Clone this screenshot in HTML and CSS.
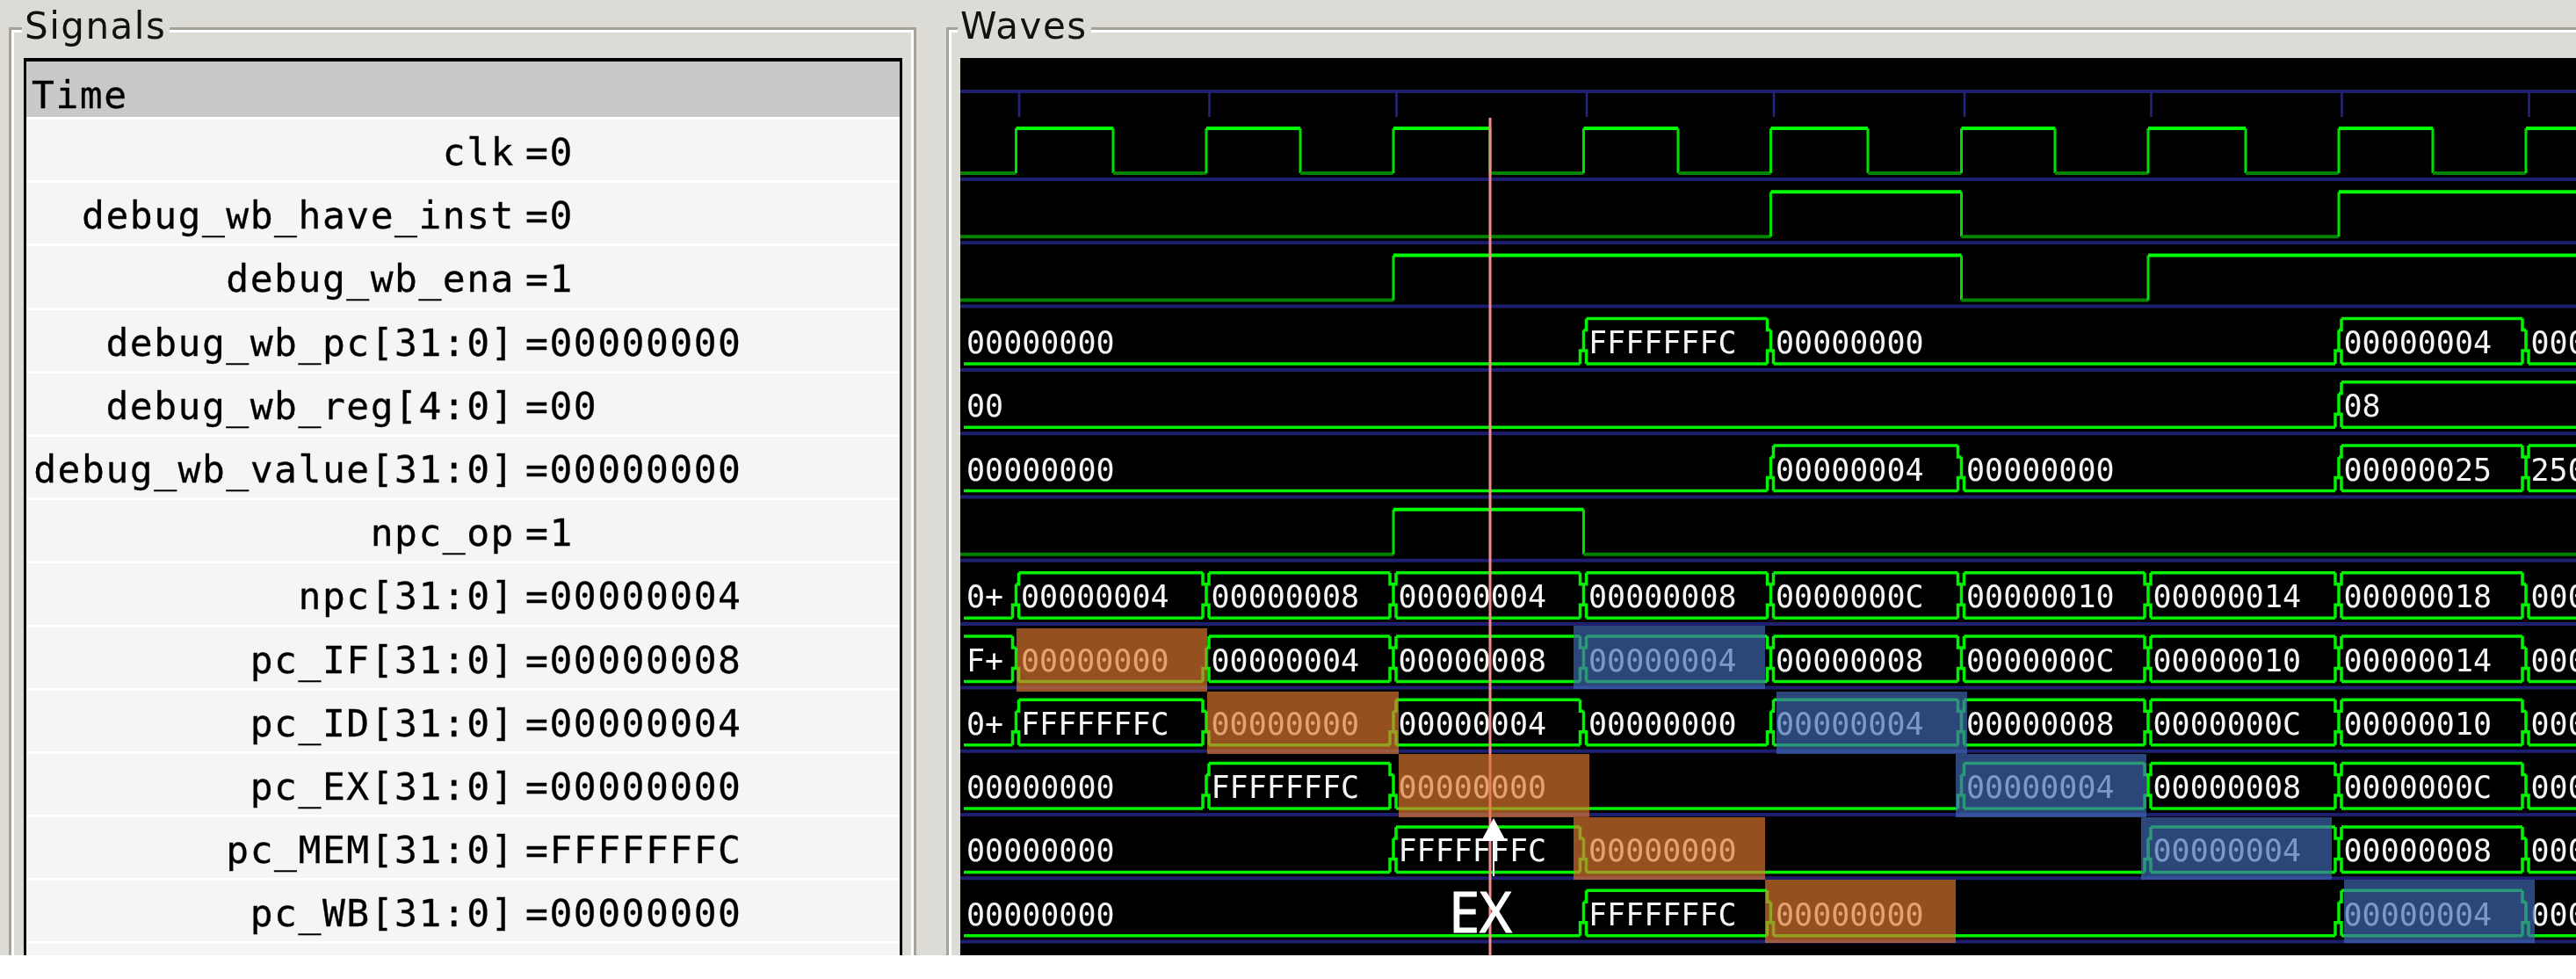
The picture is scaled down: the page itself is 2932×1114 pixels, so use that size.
FILE: index.html
```html
<!DOCTYPE html>
<html lang="en">
<head>
    <meta charset="utf-8">
    <title>GTKWave</title>
    <link rel="stylesheet" href="styles.css">
</head>

<body>
<div class="main">
    <div class="frame frame-signals">
        <div class="frame-inner">
            <span class="legend">Signals</span>
            <div class="sig-list">
                <div class="sig-head">Time</div>
                <div class="sig-row"><span class="sig-name">clk</span><span class="sig-val">=0</span></div>
                <div class="sig-row"><span class="sig-name">debug_wb_have_inst</span><span class="sig-val">=0</span></div>
                <div class="sig-row"><span class="sig-name">debug_wb_ena</span><span class="sig-val">=1</span></div>
                <div class="sig-row"><span class="sig-name">debug_wb_pc[31:0]</span><span class="sig-val">=00000000</span></div>
                <div class="sig-row"><span class="sig-name">debug_wb_reg[4:0]</span><span class="sig-val">=00</span></div>
                <div class="sig-row"><span class="sig-name">debug_wb_value[31:0]</span><span class="sig-val">=00000000</span></div>
                <div class="sig-row"><span class="sig-name">npc_op</span><span class="sig-val">=1</span></div>
                <div class="sig-row"><span class="sig-name">npc[31:0]</span><span class="sig-val">=00000004</span></div>
                <div class="sig-row"><span class="sig-name">pc_IF[31:0]</span><span class="sig-val">=00000008</span></div>
                <div class="sig-row"><span class="sig-name">pc_ID[31:0]</span><span class="sig-val">=00000004</span></div>
                <div class="sig-row"><span class="sig-name">pc_EX[31:0]</span><span class="sig-val">=00000000</span></div>
                <div class="sig-row"><span class="sig-name">pc_MEM[31:0]</span><span class="sig-val">=FFFFFFFC</span></div>
                <div class="sig-row"><span class="sig-name">pc_WB[31:0]</span><span class="sig-val">=00000000</span></div>
                <div class="sig-row"></div>
            </div>
        </div>
    </div>
    <div class="frame frame-waves">
        <div class="frame-inner">
            <span class="legend">Waves</span>
            <div class="wave-canvas">
                <svg id="waves" class="wave-svg" width="1839" height="1021" viewBox="1093 66 1839 1021"></svg>
            </div>
        </div>
    </div>
</div>

<script>
    const ROW = 72.3;
    // rising edges of clk, everything on the bus rows changes here
    const E = [1156.5, 1373, 1586, 1802.5, 2015.5, 2232.5, 2445, 2662, 2875];
    const FALLS = [1267, 1480, 1696, 1910, 2126, 2339, 2556, 2769];
    const LEFT = 1093, RIGHT = 2932;

    // bus rows: row number, then [value, edge it starts on], -1 is the left side
    const BUSES = [
        [3, [['00000000', -1], ['FFFFFFFC', 3], ['00000000', 4], ['00000004', 7], ['000', 8]]],
        [4, [['00', -1], ['08', 7]]],
        [5, [['00000000', -1], ['00000004', 4], ['00000000', 5], ['00000025', 7], ['250', 8]]],
        [7, [['0+', -1], ['00000004', 0], ['00000008', 1], ['00000004', 2], ['00000008', 3], ['0000000C', 4], ['00000010', 5], ['00000014', 6], ['00000018', 7], ['000', 8]]],
        [8, [['F+', -1], ['00000000', 0], ['00000004', 1], ['00000008', 2], ['00000004', 3], ['00000008', 4], ['0000000C', 5], ['00000010', 6], ['00000014', 7], ['000', 8]]],
        [9, [['0+', -1], ['FFFFFFFC', 0], ['00000000', 1], ['00000004', 2], ['00000000', 3], ['00000004', 4], ['00000008', 5], ['0000000C', 6], ['00000010', 7], ['000', 8]]],
        [10, [['00000000', -1], ['FFFFFFFC', 1], ['00000000', 2], ['00000004', 5], ['00000008', 6], ['0000000C', 7], ['000', 8]]],
        [11, [['00000000', -1], ['FFFFFFFC', 2], ['00000000', 3], ['00000004', 6], ['00000008', 7], ['000', 8]]],
        [12, [['00000000', -1], ['FFFFFFFC', 3], ['00000000', 4], ['00000004', 7], ['000', 8]]]
    ];

    // one bit rows: row number, start level, x of every toggle
    const BITS = [
        [1, 0, [E[4], E[5], E[7]]],
        [2, 0, [E[2], E[5], E[6]]],
        [6, 0, [E[2], E[3]]]
    ];

    // pipeline highlights: class, x1, x2, y1, y2
    const MARKS = [
        ['mark-orange', 1157, 1374, 715, 787],
        ['mark-orange', 1374, 1592, 787, 858],
        ['mark-orange', 1592, 1809, 858, 930],
        ['mark-orange', 1791, 2009, 930, 1001],
        ['mark-orange', 2009, 2226, 1001, 1073],
        ['mark-blue', 1791, 2009, 712, 784],
        ['mark-blue', 2022, 2239, 787, 858],
        ['mark-blue', 2226, 2443, 858, 930],
        ['mark-blue', 2437, 2654, 930, 1001],
        ['mark-blue', 2668, 2885, 1001, 1073]
    ];

    function seg(cls, x1, y1, x2, y2) {
        return `<line class="${cls}" x1="${x1}" y1="${y1}" x2="${x2}" y2="${y2}"/>`;
    }

    function poly(cls, pts) {
        return `<polyline class="${cls}" points="${pts.join(' ')}"/>`;
    }

    function drawBits(row, level, toggles) {
        const yHi = 146 + ROW * row, yLo = 197 + ROW * row;
        let out = '', x = LEFT;
        toggles.concat(RIGHT).forEach(t => {
            out += level ? seg('bit-hi', x, yHi, t, yHi) : seg('bit-lo', x, yLo, t, yLo);
            if (t < RIGHT) out += seg('bit-edge', t, yHi, t, yLo);
            level = 1 - level;
            x = t;
        });
        return out;
    }

    function isZero(v) {
        return /^0+\+?$/.test(v);
    }

    function drawBus(row, values) {
        const yt = 362.5 + ROW * (row - 3), yb = 414 + ROW * (row - 3);
        const a = yt + 13, b = yb - 15;
        let out = '';
        values.forEach((val, i) => {
            const start = val[1] < 0 ? 1097 : E[val[1]] + 3;
            const next = values[i + 1];
            const end = next ? E[next[1]] - 4 : RIGHT;
            const c = next ? E[next[1]] : 0;

            out += `<text class="bus-text" x="${val[1] < 0 ? 1100 : E[val[1]] + 5.5}" y="${yb - 12}">${val[0]}</text>`;
            out += seg('bus-line', start, yb, end, yb);
            if (!isZero(val[0])) out += seg('bus-line', start, yt, end, yt);

            if (next) {
                out += poly('bus-line', [[c - 4, yb], [c - 4, b], [c, b], [c, a]]);
                out += poly('bus-line', [[c, b], [c + 3, b], [c + 3, yb]]);
                if (!isZero(val[0])) out += poly('bus-line', [[c - 4, yt], [c - 4, a], [c, a]]);
                if (!isZero(next[0])) out += poly('bus-line', [[c, a], [c + 3, a], [c + 3, yt]]);
            }
        });
        return out;
    }

    function drawWaves() {
        let out = seg('row-line', LEFT, 104, RIGHT, 104);
        E.forEach(x => {
            out += seg('tick', x + 3.5, 104, x + 3.5, 133);
        });
        for (let k = 0; k < 13; k++) {
            out += seg('row-line', LEFT, 204 + ROW * k, RIGHT, 204 + ROW * k);
        }

        // clk
        const clk = [];
        E.forEach((x, i) => {
            clk.push(x);
            if (i < FALLS.length) clk.push(FALLS[i]);
        });
        out += drawBits(0, 0, clk);
        BITS.forEach(b => out += drawBits(b[0], b[1], b[2]));
        BUSES.forEach(b => out += drawBus(b[0], b[1]));

        out += seg('cursor', 1696, 134, 1696, 1087);
        MARKS.forEach(m => {
            out += `<rect class="${m[0]}" x="${m[1]}" y="${m[3]}" width="${m[2] - m[1]}" height="${m[4] - m[3]}"/>`;
        });

        // the EX note drawn on top of the screenshot
        out += seg('note-line', 1700, 950, 1700, 997);
        out += '<polygon class="note-head" points="1700,931 1686,957 1714,957"/>';
        out += '<text class="note-text" x="1649" y="1061">EX</text>';

        document.getElementById('waves').innerHTML = out;
    }

    drawWaves();
</script>
</body>
</html>
```

FILE: styles.css
```css
body {
    margin: 0;
    background-color: #fff;
}

.main {
    display: flex;
    gap: 34px;
    height: 1087px;
    box-sizing: border-box;
    padding: 31px 0 0 10px;
    overflow: hidden;
    background-color: #dcdbd6;
    filter: blur(0.7px);
}

/* etched GTK frame: gray line outside, white line inside */
.frame {
    height: 1100px;
    border: 3px solid #a5a297;
    box-sizing: border-box;
}

.frame-signals {
    width: 1033px;
    flex: none;
}

.frame-waves {
    flex: none;
    width: 1880px;
}

.frame-inner {
    position: relative;
    height: 100%;
    box-sizing: border-box;
    border: 3px solid #fff;
    padding: 29px 10px 0 11px;
}

.frame-waves .frame-inner {
    padding-left: 10px;
}

.legend {
    position: absolute;
    top: -31px;
    left: 9px;
    padding: 0 4px 0 3px;
    background-color: #dcdbd6;
    font-family: "DejaVu Sans", sans-serif;
    font-size: 42px;
    line-height: 48px;
    letter-spacing: 1.5px;
    color: #111;
}

.frame-waves .legend {
    left: 7px;
}

.sig-list {
    border: 3px solid #000;
    border-top-width: 4px;
    height: 1100px;
    background-color: #f5f5f5;
    font-family: "DejaVu Sans Mono", monospace;
    font-size: 43px;
    letter-spacing: 1.5px;
    -webkit-text-stroke: 0.3px #000;
    color: #000;
}

.sig-head {
    height: 63px;
    line-height: 76px;
    padding-left: 6px;
    background-color: #c9c9c9;
}

.sig-row {
    display: flex;
    height: 72.2px;
    box-sizing: border-box;
    border-top: 3px solid #fff;
    line-height: 74px;
}

.sig-name {
    width: 556px;
    text-align: right;
    flex: none;
}

.sig-val {
    margin-left: 12px;
}

.wave-canvas {
    height: 1100px;
    background-color: #000;
}

.wave-svg {
    display: block;
}

.row-line {
    stroke: #1f1f70;
    stroke-width: 4;
}

.tick {
    stroke: #24247e;
    stroke-width: 2.5;
}

.bit-hi {
    stroke: #00ff00;
    stroke-width: 4;
}

.bit-lo {
    stroke: #008400;
    stroke-width: 4;
}

.bit-edge {
    stroke: #00e000;
    stroke-width: 3;
}

.bus-line {
    stroke: #00f400;
    stroke-width: 3.5;
    fill: none;
}

.bus-text {
    font-family: "DejaVu Sans Mono", monospace;
    font-size: 35px;
    fill: #f4f4f4;
}

.cursor {
    stroke: #f48c8c;
    stroke-width: 3;
}

.mark-orange {
    fill: rgba(222, 120, 48, 0.67);
}

.mark-blue {
    fill: rgba(64, 106, 180, 0.67);
}

.note-line {
    stroke: #fff;
    stroke-width: 2;
}

.note-head {
    fill: #fff;
}

.note-text {
    font-family: "Noto Sans", sans-serif;
    font-size: 63px;
    fill: #fff;
    stroke: #fff;
    stroke-width: 1;
}
```
